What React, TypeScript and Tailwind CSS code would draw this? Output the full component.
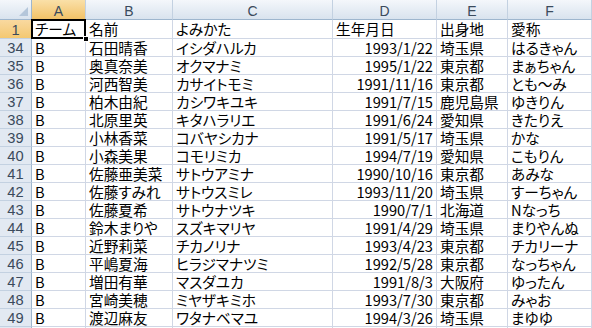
import React from "react";

const rows: [string, string, string, string, string, string, string][] = [
  ["34", "B", "石田晴香", "イシダハルカ", "1993/1/22", "埼玉県", "はるきゃん"],
  ["35", "B", "奥真奈美", "オクマナミ", "1995/1/22", "東京都", "まぁちゃん"],
  ["36", "B", "河西智美", "カサイトモミ", "1991/11/16", "東京都", "とも〜み"],
  ["37", "B", "柏木由紀", "カシワキユキ", "1991/7/15", "鹿児島県", "ゆきりん"],
  ["38", "B", "北原里英", "キタハラリエ", "1991/6/24", "愛知県", "きたりえ"],
  ["39", "B", "小林香菜", "コバヤシカナ", "1991/5/17", "埼玉県", "かな"],
  ["40", "B", "小森美果", "コモリミカ", "1994/7/19", "愛知県", "こもりん"],
  ["41", "B", "佐藤亜美菜", "サトウアミナ", "1990/10/16", "東京都", "あみな"],
  ["42", "B", "佐藤すみれ", "サトウスミレ", "1993/11/20", "埼玉県", "すーちゃん"],
  ["43", "B", "佐藤夏希", "サトウナツキ", "1990/7/1", "北海道", "Nなっち"],
  ["44", "B", "鈴木まりや", "スズキマリヤ", "1991/4/29", "埼玉県", "まりやんぬ"],
  ["45", "B", "近野莉菜", "チカノリナ", "1993/4/23", "東京都", "チカリーナ"],
  ["46", "B", "平嶋夏海", "ヒラジマナツミ", "1992/5/28", "東京都", "なっちゃん"],
  ["47", "B", "増田有華", "マスダユカ", "1991/8/3", "大阪府", "ゆったん"],
  ["48", "B", "宮崎美穂", "ミヤザキミホ", "1993/7/30", "東京都", "みゃお"],
  ["49", "B", "渡辺麻友", "ワタナベマユ", "1994/3/26", "埼玉県", "まゆゆ"],
];

const cell =
  "flex items-center overflow-visible whitespace-nowrap border-r border-b border-[#d0d7e5] px-[3px] leading-[18px] text-black";

const colHead =
  "flex items-center justify-center border-r border-b border-r-[#c3d1e1] border-b-[#9eb6ce] bg-gradient-to-b from-[#f4f7fb] to-[#d9e3ee] pt-[3px] text-[#3a4a5c] [font-family:'Liberation_Sans',sans-serif] text-[14px] leading-[16px]";

const rowHead =
  "flex items-center justify-center border-r border-b border-r-[#9eb6ce] border-b-[#c3d1e1] bg-[#e2e9f2] pt-[1px] text-[#3a4a5c] [font-family:'Liberation_Sans',sans-serif] text-[14.67px] leading-[16px]";

export default function App() {
  return (
    <div className="h-[328px] w-[592px] overflow-hidden bg-white">
      <div className="grid grid-cols-[32px_54px_87px_160px_104px_71px_1fr] grid-rows-[20px_19px_repeat(17,18px)] text-[14.67px] [font-family:'Noto_Sans_CJK_JP','Noto_Sans',sans-serif] [font-feature-settings:'palt']">
        {/* header */}
        <div className="relative border-r border-b border-r-[#9eb6ce] border-b-[#9eb6ce] bg-gradient-to-b from-[#f4f7fb] to-[#d9e3ee]">
          <svg className="absolute right-[3px] bottom-[3px]" width="9" height="9" viewBox="0 0 9 9">
            <polygon points="9,0 9,9 0,9" fill="#b4c6da" />
          </svg>
        </div>
        <div className="flex items-center justify-center border-r border-b border-r-[#c3d1e1] border-b-[#c28a30] bg-gradient-to-b from-[#fae0a8] to-[#f2c266] pt-[3px] text-[#3a4a5c] [font-family:'Liberation_Sans',sans-serif] text-[14px] leading-[16px]">
          A
        </div>
        <div className={colHead}>B</div>
        <div className={colHead}>C</div>
        <div className={colHead}>D</div>
        <div className={colHead}>E</div>
        <div className={colHead}>F</div>

        {/* row 1 */}
        <div className="flex items-center justify-center border-r border-b border-r-[#c28a30] border-b-[#c3d1e1] bg-gradient-to-b from-[#f9d9a0] to-[#f4c870] pt-[1px] text-[#3a4a5c] [font-family:'Liberation_Sans',sans-serif] text-[14.67px] leading-[16px]">
          1
        </div>
        <div className={cell + " relative"}>
          チーム
          <div className="pointer-events-none absolute -top-px -left-px right-[-1px] bottom-[-1px] border-2 border-black" />
          <div className="absolute right-[-4px] bottom-[-4px] h-[6px] w-[6px] border border-white bg-black" />
        </div>
        <div className={cell}>名前</div>
        <div className={cell}>よみかた</div>
        <div className={cell}>生年月日</div>
        <div className={cell}>出身地</div>
        <div className={cell}>愛称</div>

        {rows.map((r) => (
          <React.Fragment key={r[0]}>
            <div className={rowHead}>{r[0]}</div>
            <div className={cell}>{r[1]}</div>
            <div className={cell}>{r[2]}</div>
            <div className={cell}>{r[3]}</div>
            <div className={cell + " justify-end"}>{r[4]}</div>
            <div className={cell}>{r[5]}</div>
            <div className={cell}>{r[6]}</div>
          </React.Fragment>
        ))}

        {/* partially visible row 50 */}
        <div className="border-r border-b border-r-[#9eb6ce] border-b-[#c3d1e1] bg-[#e2e9f2]" />
        <div className="border-r border-b border-[#d0d7e5]" />
        <div className="border-r border-b border-[#d0d7e5]" />
        <div className="border-r border-b border-[#d0d7e5]" />
        <div className="border-r border-b border-[#d0d7e5]" />
        <div className="border-r border-b border-[#d0d7e5]" />
        <div className="border-r border-b border-[#d0d7e5]" />
      </div>
    </div>
  );
}
